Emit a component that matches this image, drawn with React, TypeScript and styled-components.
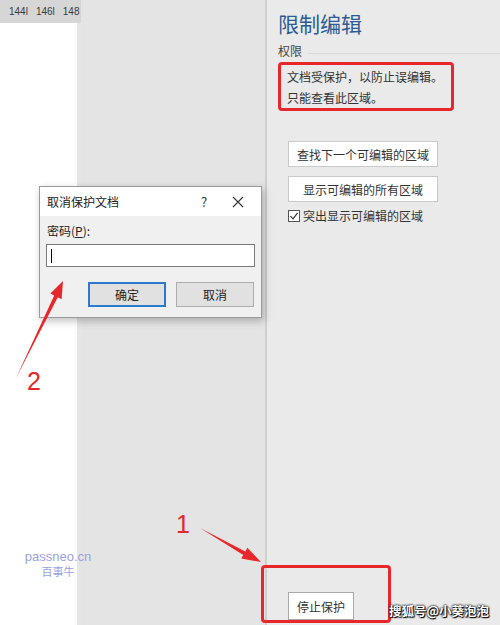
import React from "react";
import styled, { createGlobalStyle } from "styled-components";

const Global = createGlobalStyle`
  html, body { margin: 0; padding: 0; }
  body { font-family: "Noto Sans CJK SC", "Noto Sans", sans-serif; }
`;

const Screen = styled.div`
  position: relative;
  width: 500px;
  height: 625px;
  overflow: hidden;
  display: flex;
  background: #e6e6e6;
`;

const DocArea = styled.div`
  width: 265px;
  display: flex;
`;

const PageColumn = styled.div`
  width: 81px;
  display: flex;
  flex-direction: column;
`;

const Ruler = styled.div`
  height: 23px;
  background: #d6d6d6;
  display: flex;
  align-items: center;
  gap: 8px;
  padding-left: 9px;
  font-family: "Liberation Sans", sans-serif;
  font-size: 10px;
  color: #3a3a3a;
  white-space: nowrap;
`;

const Page = styled.div`
  flex: 1;
  background: #ffffff;
  margin-right: 4px;
`;

const Workspace = styled.div`
  flex: 1;
  background: #e4e4e4;
`;

const Separator = styled.div`
  width: 2px;
  background: #cfcfcf;
`;

const Pane = styled.div`
  flex: 1;
  background: #eaeaea;
  display: flex;
  flex-direction: column;
  padding-left: 11px;
`;

const Title = styled.div`
  margin-top: 8px;
  font-size: 21px;
  line-height: 30px;
  color: #2c5a93;
`;

const SectionRow = styled.div`
  display: flex;
  align-items: center;
  gap: 6px;
  margin-top: 5px;
  font-size: 12px;
  line-height: 16px;
  color: #444;
`;

const SectionLine = styled.div`
  flex: 1;
  height: 1px;
  background: #d8d8d8;
  margin-top: 4px;
`;

const Highlight = styled.div`
  margin-top: 3px;
  width: 176px;
  height: 49px;
  box-sizing: border-box;
  border: 3px solid #e8272b;
  border-radius: 4px;
  padding: 1px 0 0 6px;
  font-size: 12px;
  line-height: 21px;
  color: #333;
`;

const ActionButton = styled.div<{ $top: number }>`
  margin-top: ${(p) => p.$top}px;
  margin-left: 10px;
  width: 150px;
  height: 26px;
  box-sizing: border-box;
  background: #fff;
  border: 1px solid #cacaca;
  display: flex;
  align-items: center;
  justify-content: center;
  font-size: 12px;
  color: #333;
`;

const CheckRow = styled.div`
  margin-top: 5px;
  margin-left: 10px;
  display: flex;
  align-items: center;
  gap: 3px;
  font-size: 12px;
  color: #333;
`;

const Box = styled.div`
  width: 12px;
  height: 12px;
  box-sizing: border-box;
  border: 1px solid #555;
  background: #fff;
  display: flex;
  align-items: center;
  justify-content: center;
`;

const Spacer = styled.div`
  flex: 1;
`;

const StopButton = styled.div`
  margin-left: 10px;
  margin-bottom: 5px;
  width: 66px;
  height: 28px;
  box-sizing: border-box;
  background: #fff;
  border: 1px solid #a9a9a9;
  display: flex;
  align-items: center;
  justify-content: center;
  font-size: 12px;
  color: #333;
`;

const Dialog = styled.div`
  position: absolute;
  left: 39px;
  top: 186px;
  width: 223px;
  height: 132px;
  box-sizing: border-box;
  border: 1px solid #9a9a9a;
  background: #f0f0f0;
  box-shadow: 2px 3px 8px rgba(0, 0, 0, 0.25);
  display: flex;
  flex-direction: column;
`;

const TitleBar = styled.div`
  height: 29px;
  background: #fff;
  display: flex;
  align-items: center;
  padding-left: 7px;
  font-size: 12px;
  color: #222;
`;

const TitleText = styled.div`
  flex: 1;
`;

const TitleIcon = styled.div<{ $w: number }>`
  width: ${(p) => p.$w}px;
  display: flex;
  align-items: center;
  justify-content: center;
  font-size: 13px;
  color: #333;
`;

const DialogBody = styled.div`
  flex: 1;
  padding: 7px 6px 0 6px;
  display: flex;
  flex-direction: column;
`;

const Label = styled.div`
  font-size: 12px;
  line-height: 16px;
  color: #222;
  padding-left: 1px;
  u { text-decoration: underline; }
`;

const Input = styled.div`
  margin-top: 5px;
  height: 23px;
  box-sizing: border-box;
  background: #fff;
  border: 1px solid #7a7a7a;
  display: flex;
  align-items: center;
  padding-left: 4px;
`;

const Caret = styled.div`
  width: 1px;
  height: 14px;
  background: #000;
`;

const ButtonRow = styled.div`
  margin-top: 15px;
  display: flex;
  justify-content: flex-end;
  gap: 10px;
  padding-right: 1px;
`;

const DlgButton = styled.div<{ $default?: boolean }>`
  width: 78px;
  height: 25px;
  box-sizing: border-box;
  background: #e1e1e1;
  border: ${(p) => (p.$default ? "2px solid #2a7bd0" : "1px solid #adadad")};
  display: flex;
  align-items: center;
  justify-content: center;
  font-size: 12px;
  color: #222;
`;

const Overlay = styled.svg`
  position: absolute;
  left: 0;
  top: 0;
  pointer-events: none;
`;

const Callout = styled.div<{ $x: number; $y: number }>`
  position: absolute;
  left: ${(p) => p.$x}px;
  top: ${(p) => p.$y}px;
  font-family: "Liberation Sans", sans-serif;
  font-size: 25px;
  color: #e8272b;
`;

const RedFrame = styled.div`
  position: absolute;
  left: 261px;
  top: 565px;
  width: 130px;
  height: 58px;
  box-sizing: border-box;
  border: 3px solid #e8272b;
  border-radius: 4px;
`;

const Watermark = styled.div`
  position: absolute;
  left: 389px;
  top: 601px;
  font-size: 12.5px;
  font-weight: 700;
  color: #fff;
  text-shadow: 0 0 2px #000, 0 0 2px #000, 1px 1px 1px #000;
  white-space: nowrap;
`;

const BrandMark = styled.div`
  position: absolute;
  left: 24px;
  top: 549px;
  width: 68px;
  display: flex;
  flex-direction: column;
  align-items: center;
  color: #9aa3e0;
`;

const Brand = styled.div`
  font-family: "Liberation Sans", sans-serif;
  font-size: 13px;
  line-height: 15px;
`;

const BrandSub = styled.div`
  font-size: 11px;
  line-height: 14px;
`;

export default function App() {
  return (
    <>
      <Global />
      <Screen>
        <DocArea>
          <PageColumn>
            <Ruler>
              <span>144l</span>
              <span>146l</span>
              <span>148</span>
            </Ruler>
            <Page />
          </PageColumn>
          <Workspace />
        </DocArea>
        <Separator />
        <Pane>
          <Title>限制编辑</Title>
          <SectionRow>
            权限
            <SectionLine />
          </SectionRow>
          <Highlight>
            文档受保护，以防止误编辑。
            <br />
            只能查看此区域。
          </Highlight>
          <ActionButton $top={30}>查找下一个可编辑的区域</ActionButton>
          <ActionButton $top={9}>显示可编辑的所有区域</ActionButton>
          <CheckRow>
            <Box>
              <svg width="10" height="10" viewBox="0 0 10 10">
                <path d="M1.5 5.2 L4 7.8 L8.6 1.8" fill="none" stroke="#333" strokeWidth="1.2" />
              </svg>
            </Box>
            突出显示可编辑的区域
          </CheckRow>
          <Spacer />
          <StopButton>停止保护</StopButton>
        </Pane>

        <BrandMark>
          <Brand>passneo.cn</Brand>
          <BrandSub>百事牛</BrandSub>
        </BrandMark>

        <Dialog>
          <TitleBar>
            <TitleText>取消保护文档</TitleText>
            <TitleIcon $w={22}>?</TitleIcon>
            <TitleIcon $w={46}>
              <svg width="12" height="12" viewBox="0 0 12 12">
                <path d="M1 1 L11 11 M11 1 L1 11" stroke="#333" strokeWidth="1.1" />
              </svg>
            </TitleIcon>
          </TitleBar>
          <DialogBody>
            <Label>
              密码(<u>P</u>):
            </Label>
            <Input>
              <Caret />
            </Input>
            <ButtonRow>
              <DlgButton $default>确定</DlgButton>
              <DlgButton>取消</DlgButton>
            </ButtonRow>
          </DialogBody>
        </Dialog>

        <Overlay width="500" height="625" viewBox="0 0 500 625">
          <polygon
            points="16,378 54.2,295.5 50.4,293.6 63,281 61.6,299.2 57.8,297.3"
            fill="#e8272b"
          />
          <polygon
            points="200,528 245.3,551.5 247.4,547.8 261,562 241.2,558.6 243.3,554.9"
            fill="#e8272b"
          />
        </Overlay>
        <Callout $x={27} $y={367}>2</Callout>
        <Callout $x={176} $y={510}>1</Callout>
        <RedFrame />
        <Watermark>搜狐号@小葵泡泡</Watermark>
      </Screen>
    </>
  );
}
